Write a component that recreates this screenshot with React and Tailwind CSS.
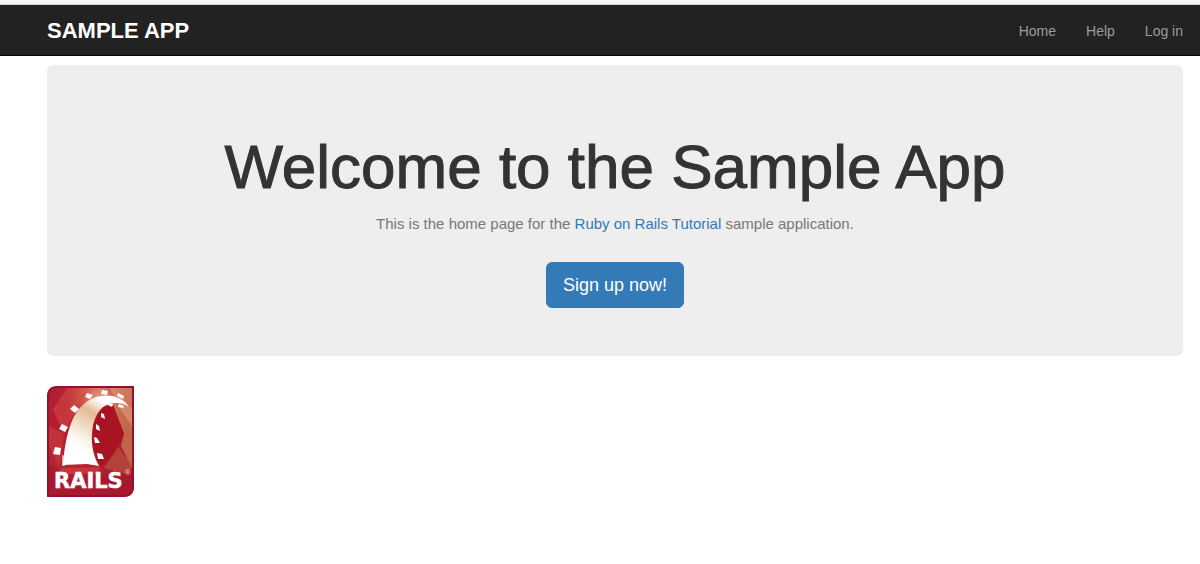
function RailsLogo() {
  return (
    <svg viewBox="0 0 87 111" className="block h-[111px] w-[87px]" role="img" aria-label="Rails logo">
      <defs>
        <linearGradient id="ground" x1="0" y1="0" x2="1" y2="1">
          <stop offset="0" stopColor="#b01c33" />
          <stop offset="0.5" stopColor="#b8232c" />
          <stop offset="1" stopColor="#a91830" />
        </linearGradient>
        <radialGradient id="glow" cx="0.6" cy="0.12" r="0.5">
          <stop offset="0" stopColor="#e9a27f" />
          <stop offset="0.5" stopColor="#cc5547" stopOpacity="0.7" />
          <stop offset="1" stopColor="#b8232c" stopOpacity="0" />
        </radialGradient>
        <linearGradient id="track" gradientUnits="userSpaceOnUse" x1="64" y1="10" x2="26" y2="78">
          <stop offset="0" stopColor="#fff" />
          <stop offset="0.12" stopColor="#fff" />
          <stop offset="0.3" stopColor="#e3bb94" />
          <stop offset="0.65" stopColor="#faf3ea" />
          <stop offset="0.8" stopColor="#fff" />
        </linearGradient>
        <clipPath id="badge">
          <path d="M11 0H87V100Q87 111 76 111H0V11Q0 0 11 0Z" />
        </clipPath>
      </defs>
      <g clipPath="url(#badge)">
        <path fill="url(#ground)" d="M0 0H87V111H0Z" />
        <path fill="#d64a4d" opacity="0.55" d="M6 23L20 2L38 2L17 48Z" />
        <path fill="#cc4146" opacity="0.55" d="M2 40L17 48L12 84L2 78Z" />
        <path fill="#8d1226" opacity="0.35" d="M2 60L14 84L2 111Z" />
        <path fill="url(#glow)" d="M0 0H87V111H0Z" />
        <path fill="#c98155" opacity="0.7" d="M66 17L86 22V84L74 60L77 48Z" />
        <path fill="#dba17c" opacity="0.6" d="M63 2H86V42L74 24Z" />
        <path fill="#a81422" d="M55 20L66 19L77 48L66 72L54 81L45 62L46 34Z" />
        <path fill="#b4523e" opacity="0.7" d="M57 82L71 61L86 80L80 88Z" />
        <path fill="#d5474b" opacity="0.55" d="M14 82L54 81L48 90L30 87L8 94Z" />
        <path fill="#a31730" opacity="0.6" d="M2 88H85V109H2Z" />
      </g>
      <path fill="#ddb3b3" d="M15 69L18 70V80H15Z" />
      <path
        fill="url(#track)"
        d="M16 79C17 65 19 50 25 35C31 21 41 12 54 10C66 8 76 12 82 21C77 17 69 16 62 18C52 21 46 33 45 47C44 60 47 71 52 80L40 78Z"
      />
      <g fill="#fff">
        <path d="M8 61L14 62L13 69L6 68Z" />
        <path d="M15 38L21 41L18 46L12 43Z" />
        <path d="M27 19L32 23L28 27L23 23Z" />
        <path d="M40 7L46 9L43 13L38 11Z" />
        <path d="M55 4L61 5L60 9L54 8Z" />
        <path d="M71 7L77 10L76 13L70 10Z" />
        <path d="M62 17L66 18L65 21L61 19Z" />
        <path d="M72 18L77 20L76 22L71 21Z" />
        <path d="M54 27L57 28L58 33L54 31Z" />
        <path d="M49 38L52 40L53 45L49 43Z" />
        <path d="M47 51L50 52L53 57L48 57Z" />
        <path d="M50 67L55 68L57 73L51 73Z" />
      </g>
      <path
        fill="none"
        stroke="#98102f"
        strokeWidth="2"
        d="M11 1H86V100Q86 110 76 110H1V11Q1 1 11 1Z"
      />
      <text x="7" y="102" fill="#fff" stroke="#fff" strokeWidth="0.5" className="font-['DejaVu_Sans',sans-serif] text-[21px] font-bold">
        RAILS
      </text>
      <text x="78" y="89" fill="#f1c6c6" className="font-['Liberation_Sans',sans-serif] text-[8px]">
        ®
      </text>
    </svg>
  );
}

const links = ["Home", "Help", "Log in"];

export default function App() {
  return (
    <div className="min-h-screen bg-white font-['Liberation_Sans',Arial,sans-serif] text-[#333]">
      <div className="h-1 bg-[#f7f7f7]" />
      <header className="border-y border-t-[#d0d0d0] border-b-[#080808] bg-[#222]">
        <div className="flex h-[50px] items-center justify-between pt-px pr-[17px] pl-[47px]">
          <a href="#" className="text-[22px] font-bold text-white">
            SAMPLE APP
          </a>
          <nav>
            <ul className="flex gap-[30px] text-sm leading-[22px] text-[#9d9d9d]">
              {links.map((label) => (
                <li key={label}>
                  <a href="#" className="hover:text-white">{label}</a>
                </li>
              ))}
            </ul>
          </nav>
        </div>
      </header>
      <main className="pt-[9px] pr-[17px] pl-[47px]">
        <section className="mb-[30px] flex flex-col items-center rounded-md bg-[#eee] px-4 pt-[70px] pb-12 text-center">
          <h1 className="text-[62px] leading-[64px] font-normal [-webkit-text-stroke:1px_#333]">
            Welcome to the Sample App
          </h1>
          <p className="mt-3 mb-[25px] text-[15px] leading-[26px] text-[#777]">
            This is the home page for the{" "}
            <a href="#" className="text-[#337ab7]">Ruby on Rails Tutorial</a> sample application.
          </p>
          <a
            href="#"
            className="rounded-md border border-[#337ab7] bg-[#337ab7] px-4 py-[10px] text-lg leading-6 text-white"
          >
            Sign up now!
          </a>
        </section>
        <a href="#" className="inline-block">
          <RailsLogo />
        </a>
      </main>
    </div>
  );
}
